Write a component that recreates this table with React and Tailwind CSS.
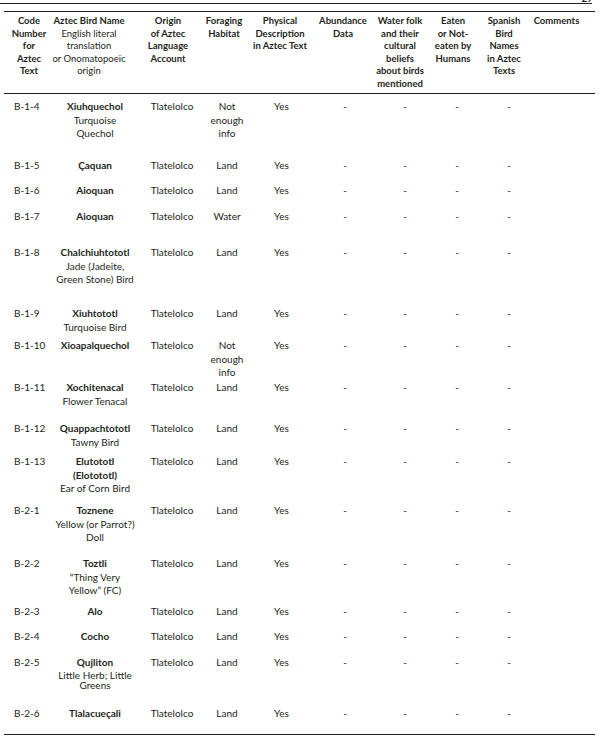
const cols = [
  { w: "w-[55px]", h: "pr-[5px]", d: "pl-[10px] items-start" },
  { w: "w-[69px]", h: "pr-[9px]", d: "pl-[3px]" },
  { w: "w-[68px]", h: "pl-[12px]", d: "pl-[20px]" },
  { w: "w-[56px]", h: "", d: "pl-[6px]" },
  { w: "w-[59px]", h: "pr-[3px]", d: "" },
  { w: "w-[60px]", h: "pl-[4px]", d: "pl-[8px]" },
  { w: "w-[55px]", h: "pl-[3px]", d: "pl-[13px]" },
  { w: "w-[52px]", h: "pl-[2px]", d: "pl-[10px]" },
  { w: "w-[52px]", h: "", d: "pl-[10px]" },
  { w: "w-[65px]", h: "pr-[12px]", d: "" },
];

const headers = [
  [["Code", "Number", "for", "Aztec", "Text"]],
  [["Aztec Bird Name"], ["English literal", "translation", "or Onomatopoeic", "origin"]],
  [["Origin", "of Aztec", "Language", "Account"]],
  [["Foraging", "Habitat"]],
  [["Physical", "Description", "in Aztec Text"]],
  [["Abundance", "Data"]],
  [["Water folk", "and their", "cultural", "beliefs", "about birds", "mentioned"]],
  [["Eaten", "or Not-", "eaten by", "Humans"]],
  [["Spanish", "Bird", "Names", "in Aztec", "Texts"]],
  [["Comments"]],
];

const rows = [
  { code: "B-1-4", name: ["Xiuhquechol"], eng: ["Turquoise", "Quechol"], hab: ["Not", "enough", "info"], h: "h-[59px]" },
  { code: "B-1-5", name: ["Çaquan"], eng: [], hab: ["Land"], h: "h-[25px]" },
  { code: "B-1-6", name: ["Aioquan"], eng: [], hab: ["Land"], h: "h-[26px]" },
  { code: "B-1-7", name: ["Aioquan"], eng: [], hab: ["Water"], h: "h-[36px]" },
  { code: "B-1-8", name: ["Chalchiuhtototl"], eng: ["Jade (Jadeite,", "Green Stone) Bird"], hab: ["Land"], h: "h-[61px]" },
  { code: "B-1-9", name: ["Xiuhtototl"], eng: ["Turquoise Bird"], hab: ["Land"], h: "h-[32px]" },
  { code: "B-1-10", name: ["Xioapalquechol"], eng: [], hab: ["Not", "enough", "info"], h: "h-[42px]" },
  { code: "B-1-11", name: ["Xochitenacal"], eng: ["Flower Tenacal"], hab: ["Land"], h: "h-[41px]" },
  { code: "B-1-12", name: ["Quappachtototl"], eng: ["Tawny Bird"], hab: ["Land"], h: "h-[33px]" },
  { code: "B-1-13", name: ["Elutototl", "(Elotototl)"], eng: ["Ear of Corn Bird"], hab: ["Land"], h: "h-[49px]" },
  { code: "B-2-1", name: ["Toznene"], eng: ["Yellow (or Parrot?)", "Doll"], hab: ["Land"], h: "h-[53px]" },
  { code: "B-2-2", name: ["Toztli"], eng: ["“Thing Very", "Yellow” (FC)"], hab: ["Land"], h: "h-[48px]" },
  { code: "B-2-3", name: ["Alo"], eng: [], hab: ["Land"], h: "h-[25px]" },
  { code: "B-2-4", name: ["Cocho"], eng: [], hab: ["Land"], h: "h-[26px]" },
  { code: "B-2-5", name: ["Qujliton"], eng: ["Little Herb; Little", "Greens"], tight: true, hab: ["Land"], h: "h-[51px]" },
  { code: "B-2-6", name: ["Tlalacueçali"], eng: [], hab: ["Land"], h: "h-[27px]" },
];

function Lines({ items, className = "" }) {
  return items.map((t, i) => (
    <div key={i} className={"whitespace-nowrap " + className}>
      {t}
    </div>
  ));
}

function Row({ r }) {
  const cells = [
    <Lines items={[r.code]} />,
    <>
      <Lines items={r.name} className="font-bold" />
      {r.tight ? (
        <div className="flex flex-col items-center leading-[10px] text-[10px]">
          <Lines items={r.eng} />
        </div>
      ) : (
        <Lines items={r.eng} />
      )}
    </>,
    <Lines items={["Tlatelolco"]} />,
    <Lines items={r.hab} />,
    <Lines items={["Yes"]} />,
    <Lines items={["-"]} />,
    <Lines items={["-"]} />,
    <Lines items={["-"]} />,
    <Lines items={["-"]} />,
    null,
  ];
  return (
    <div className={"flex " + r.h}>
      {cells.map((c, i) => (
        <div
          key={i}
          className={"flex flex-col items-center shrink-0 " + cols[i].w + " " + cols[i].d}
        >
          {c}
        </div>
      ))}
    </div>
  );
}

export default function App() {
  return (
    <div
      className="w-[599px] h-[740px] bg-white text-[#231f20] overflow-hidden"
      style={{ fontFamily: "Lato, 'Open Sans', sans-serif" }}
    >
      <div className="h-[3px] overflow-hidden flex justify-end items-end pr-[6px]">
        <span className="text-[10px] leading-[10px] font-bold">27</span>
      </div>
      <div className="w-[592px] border-t border-[#231f20]" />
      <div className="ml-[4px] w-[591px] mt-[7px]">
        <div className="border-t-[1.5px] border-[#231f20]" />
        <div className="flex h-[81px] pt-[3px] text-[9.5px] leading-[12.6px]">
          {headers.map((groups, i) => (
            <div
              key={i}
              className={"flex flex-col items-center shrink-0 " + cols[i].w + " " + cols[i].h}
            >
              {groups.map((g, j) => (
                <Lines key={j} items={g} className={j === 0 ? "font-bold" : ""} />
              ))}
            </div>
          ))}
        </div>
        <div className="border-t-[1.5px] border-[#231f20]" />
        <div className="pt-[6px] text-[10px] leading-[13.5px]">
          {rows.map((r) => (
            <Row key={r.code} r={r} />
          ))}
        </div>
        <div className="border-t-[1.5px] border-[#231f20]" />
      </div>
    </div>
  );
}
